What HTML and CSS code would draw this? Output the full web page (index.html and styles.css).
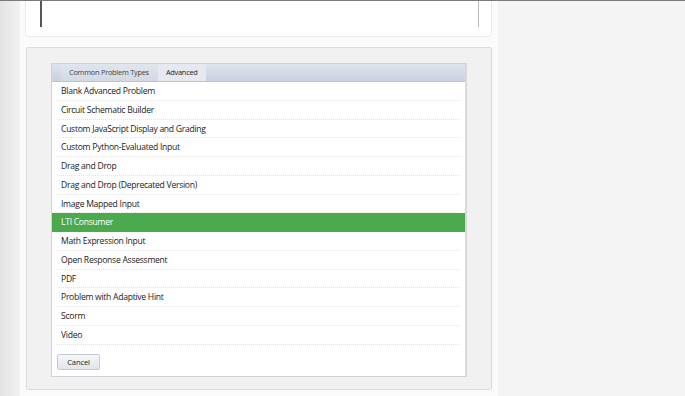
FILE: index.html
```html
<!DOCTYPE html>
<html lang="en">
<head>
    <meta charset="UTF-8">
    <meta name="viewport" content="width=device-width, initial-scale=1.0">
    <title>Add Advanced Component</title>
    <link rel="stylesheet" href="styles.css">
</head>
<body>
    <div class="gutter"></div>
    <div class="main">
        <div class="editor-card">
            <div class="editor-box"></div>
        </div>
        <div class="component-card">
            <div class="menu-panel">
                <ul class="tabs">
                    <li class="tab">Common Problem Types</li>
                    <li class="tab active">Advanced</li>
                </ul>
                <ul class="templates">
                    <li><span>Blank Advanced Problem</span></li>
                    <li><span>Circuit Schematic Builder</span></li>
                    <li><span>Custom JavaScript Display and Grading</span></li>
                    <li><span>Custom Python-Evaluated Input</span></li>
                    <li><span>Drag and Drop</span></li>
                    <li><span>Drag and Drop (Deprecated Version)</span></li>
                    <li><span>Image Mapped Input</span></li>
                    <li class="selected"><span>LTI Consumer</span></li>
                    <li><span>Math Expression Input</span></li>
                    <li><span>Open Response Assessment</span></li>
                    <li><span>PDF</span></li>
                    <li><span>Problem with Adaptive Hint</span></li>
                    <li><span>Scorm</span></li>
                    <li><span>Video</span></li>
                </ul>
                <div class="actions">
                    <button class="cancel-button">Cancel</button>
                </div>
            </div>
        </div>
    </div>
    <div class="side"></div>
</body>
</html>
```

FILE: styles.css
```css
/* Reset some default styles */
* {
    box-sizing: border-box;
    margin: 0;
    padding: 0;
}

body {
    font-family: 'Open Sans', 'Liberation Sans', sans-serif;
    background-color: #fbfbfb;
    display: flex;
    height: 396px;
    overflow: hidden;
    border-top: 1px solid #7a7a7a;
}

.gutter {
    width: 20px;
    background: linear-gradient(to right, #e4e4e4, #f1f1f1);
}

.main {
    width: 478px;
    padding: 0 6px 0 5px;
}

.editor-card {
    height: 36px;
    background-color: #fff;
    border: 1px solid #ebebeb;
    border-top: none;
    border-radius: 0 0 4px 4px;
    padding: 0 12px 0 14px;
}

.editor-box {
    height: 26px;
    border-left: 2px solid #555;
    border-right: 1px solid #b8b8b8;
}

.component-card {
    margin-top: 10px;
    margin-left: 1px;
    height: 343px;
    background-color: #f1f1f1;
    border: 1px solid #dcdcdc;
    border-radius: 2px;
    padding: 15px 24px 0 24px;
}

.menu-panel {
    background-color: #fff;
    border: 1px solid #cfd2d8;
    border-right: 2px solid #d8d8dc;
    height: 314px;
}

.tabs {
    list-style: none;
    display: flex;
    height: 18px;
    padding-left: 9px;
    background: linear-gradient(to bottom, #dfe4ed, #c9d1de);
    border-bottom: 1px solid #bac4d4;
}

.tab {
    font-size: 7.4px;
    letter-spacing: -0.25px;
    color: #444;
    line-height: 17px;
    padding: 0 9px 0 8px;
    background: linear-gradient(to bottom, #e1e5ee, #d2d9e5);
}

.tab.active {
    color: #222;
    padding: 0 8px;
    background: #e6e9ef;
}

.templates {
    list-style: none;
}

.templates li {
    height: 18.75px;
    font-size: 8.6px;
    letter-spacing: -0.28px;
    color: #1a1a1a;
}

.templates li span {
    display: block;
    height: 100%;
    line-height: 18px;
    margin: 0 5px;
    padding-left: 4px;
    border-bottom: 1px dotted #e2e2e2;
}

.templates li.selected {
    background-color: #4caa4e;
    color: #fff;
}

.templates li.selected span {
    border-bottom-color: transparent;
}

.actions {
    padding: 9px 5px 0;
}

.cancel-button {
    display: block;
    width: 43px;
    height: 16px;
    font-family: inherit;
    font-size: 7.6px;
    letter-spacing: -0.15px;
    color: #222;
    background: linear-gradient(to bottom, #f6f7f9, #e1e5eb);
    border: 1px solid #c6cbd3;
    border-radius: 2px;
}

.side {
    flex: 1;
    background-color: #f4f4f4;
}
```
